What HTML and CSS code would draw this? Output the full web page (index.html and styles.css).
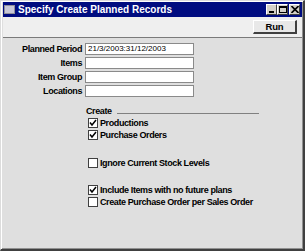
FILE: index.html
```html
<!DOCTYPE html>
<html lang="en">
<head>
    <meta charset="UTF-8">
    <title>Specify Create Planned Records</title>
    <link rel="stylesheet" href="styles.css">
</head>
<body>
    <div class="window">
        <div class="titlebar">
            <span class="app-icon"></span>
            <span class="title">Specify Create Planned Records</span>
            <div class="win-btns">
                <span class="win-btn"><svg width="8" height="7" viewBox="0 0 8 7"><rect x="1" y="5" width="5" height="2" fill="#000"/></svg></span>
                <span class="win-btn"><svg width="8" height="7" viewBox="0 0 8 7"><rect x="0.5" y="0.5" width="7" height="6" fill="none" stroke="#000"/><rect x="0" y="0" width="8" height="2" fill="#000"/></svg></span>
                <span class="win-btn close"><svg width="8" height="7" viewBox="0 0 8 7"><path d="M0.5 0 L7.5 7 M7.5 0 L0.5 7" stroke="#000" stroke-width="1.6"/></svg></span>
            </div>
        </div>

        <div class="toolbar">
            <button class="run-btn">Run</button>
        </div>

        <div class="content">
            <div class="fields">
                <label>Planned Period</label>
                <div class="input">21/3/2003:31/12/2003</div>
                <label>Items</label>
                <div class="input"></div>
                <label>Item Group</label>
                <div class="input"></div>
                <label>Locations</label>
                <div class="input"></div>
            </div>

            <div class="options">
                <div class="group-head">
                    <span>Create</span>
                    <span class="rule"></span>
                </div>
                <div class="check on">Productions</div>
                <div class="check on">Purchase Orders</div>

                <div class="check spaced">Ignore Current Stock Levels</div>

                <div class="check on spaced">Include Items with no future plans</div>
                <div class="check">Create Purchase Order per Sales Order</div>
            </div>
        </div>
    </div>
</body>
</html>
```

FILE: styles.css
```css
body {
    margin: 0;
    font-family: "Liberation Sans", Arial, sans-serif;
    background: #dcdcdc;
}

.window {
    width: 305px;
    height: 251px;
    box-sizing: border-box;
    border: 1px solid #dcdcdc;
    border-right: 2px solid #404040;
    border-bottom: 2px solid #404040;
    box-shadow: inset 1px 1px 0 #ffffff, inset -1px -1px 0 #909090;
    padding: 1px 1px 1px 2px;
    display: flex;
    flex-direction: column;
    background: #dfdfdf;
}

.titlebar {
    height: 15px;
    background: #000c80;
    display: flex;
    align-items: center;
    padding: 0 2px 0 1px;
}

.app-icon {
    width: 11px;
    height: 9px;
    background: #c8c8d8;
    border: 1px solid #909098;
    box-sizing: border-box;
    margin-right: 3px;
}

.title {
    color: #ffffff;
    font-weight: bold;
    font-size: 10px;
    flex: 1;
}

.win-btns {
    display: flex;
}

.win-btn {
    width: 11px;
    height: 11px;
    box-sizing: border-box;
    background: #d4d0c8;
    border: 1px solid #ffffff;
    border-right-color: #404040;
    border-bottom-color: #404040;
    display: flex;
    align-items: center;
    justify-content: center;
}

.win-btn.close {
    margin-left: 1px;
}

.toolbar {
    height: 20px;
    background: #efefef;
    border-bottom: 1px solid #7a7a7a;
    display: flex;
    justify-content: flex-end;
    align-items: center;
    padding-right: 5px;
}

.run-btn {
    width: 44px;
    height: 14px;
    padding: 0;
    font-family: inherit;
    font-weight: bold;
    font-size: 9.5px;
    letter-spacing: -0.2px;
    background: #e8e8e8;
    border: 1px solid #ffffff;
    border-right: 2px solid #404040;
    border-bottom: 2px solid #404040;
}

.content {
    flex: 1;
    padding-top: 5px;
}

.fields {
    display: grid;
    grid-template-columns: 79px 109px;
    column-gap: 3px;
    row-gap: 2px;
    align-items: center;
}

.fields label {
    text-align: right;
    font-weight: bold;
    font-size: 9px;
    letter-spacing: -0.4px;
}

.input {
    height: 12px;
    box-sizing: border-box;
    background: #ffffff;
    border: 1px solid #8a8a8a;
    font-size: 8px;
    line-height: 10px;
    padding-left: 2px;
}

.options {
    margin-left: 83px;
    margin-top: 8px;
}

.group-head {
    display: flex;
    align-items: center;
    font-weight: bold;
    font-size: 9px;
    letter-spacing: -0.4px;
    height: 12px;
}

.rule {
    width: 142px;
    height: 1px;
    background: #808080;
    margin-left: 5px;
    margin-top: 4px;
}

.check {
    display: flex;
    align-items: center;
    font-weight: bold;
    font-size: 9px;
    letter-spacing: -0.4px;
    height: 12px;
}

.check::before {
    content: "";
    width: 10px;
    height: 10px;
    box-sizing: border-box;
    background: #ffffff;
    border: 1px solid #404040;
    margin: 0 2px 0 2px;
}

.check.on::before {
    background: #ffffff url("data:image/svg+xml,%3Csvg xmlns='http://www.w3.org/2000/svg' width='8' height='8'%3E%3Cpath d='M1 3.5 L3 6 L7 1' fill='none' stroke='black' stroke-width='1.5'/%3E%3C/svg%3E") center / 8px 8px no-repeat;
}

.check.spaced {
    margin-top: 15.5px;
}
```
